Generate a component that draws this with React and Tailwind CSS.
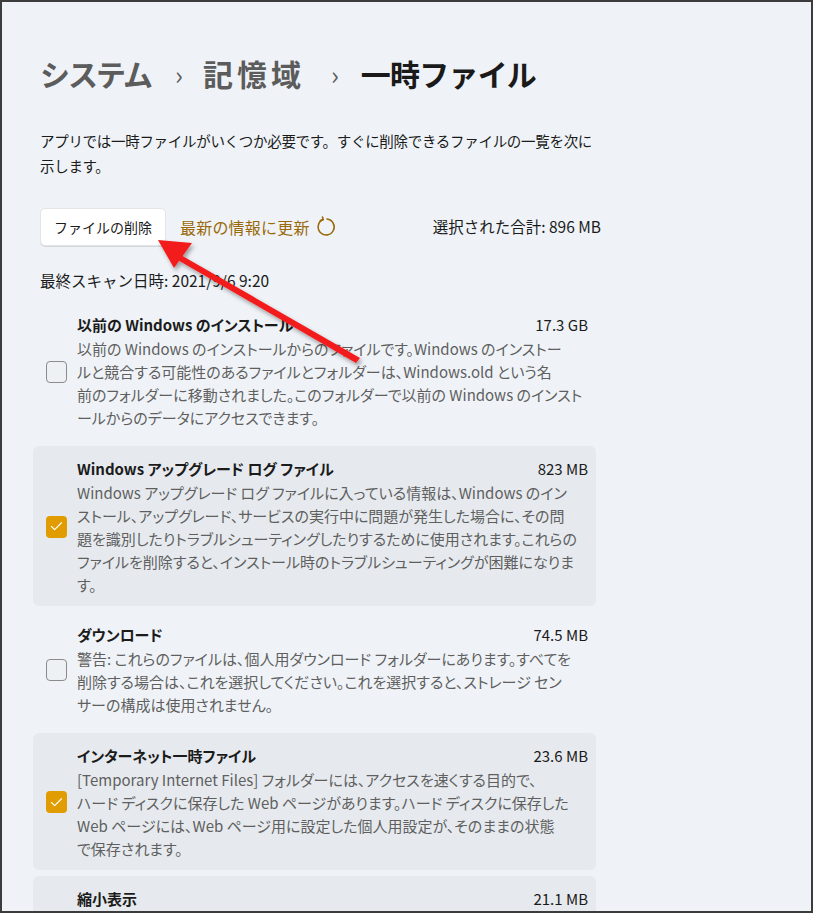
import { Check } from 'lucide-react'

const font = { fontFamily: '"Noto Sans CJK JP", "Noto Sans", sans-serif' }

const items = [
  {
    title: '以前の Windows のインストール',
    size: '17.3 GB',
    checked: false,
    lines: [
      '以前の Windows のインストールからのファイルです。Windows のインストー',
      'ルと競合する可能性のあるファイルとフォルダーは、Windows.old という名',
      '前のフォルダーに移動されました。このフォルダーで以前の Windows のインスト',
      'ールからのデータにアクセスできます。',
    ],
  },
  {
    title: 'Windows アップグレード ログ ファイル',
    size: '823 MB',
    checked: true,
    lines: [
      'Windows アップグレード ログ ファイルに入っている情報は、Windows のイン',
      'ストール、アップグレード、サービスの実行中に問題が発生した場合に、その問',
      '題を識別したりトラブルシューティングしたりするために使用されます。これらの',
      'ファイルを削除すると、インストール時のトラブルシューティングが困難になりま',
      'す。',
    ],
  },
  {
    title: 'ダウンロード',
    size: '74.5 MB',
    checked: false,
    lines: [
      '警告: これらのファイルは、個人用ダウンロード フォルダーにあります。すべてを',
      '削除する場合は、これを選択してください。これを選択すると、ストレージ セン',
      'サーの構成は使用されません。',
    ],
  },
  {
    title: 'インターネット一時ファイル',
    size: '23.6 MB',
    checked: true,
    lines: [
      '[Temporary Internet Files] フォルダーには、アクセスを速くする目的で、',
      'ハード ディスクに保存した Web ページがあります。ハード ディスクに保存した',
      'Web ページには、Web ページ用に設定した個人用設定が、そのままの状態',
      'で保存されます。',
    ],
  },
  {
    title: '縮小表示',
    size: '21.1 MB',
    checked: true,
    lines: [
      'Windows では、すべての画像、ビデオ、ドキュメント ファイルの縮小表示のコピ',
      'ーが保持されるため、フォルダーを開いたときにすぐに表示できます。これらの',
      '縮小表示を削除すると、必要に応じて自動的に再作成されます。',
    ],
  },
]

function CheckBox({ checked }) {
  if (checked) {
    return (
      <div className="w-[21px] h-[22px] rounded-[4px] bg-[#e09c00] flex items-center justify-center shrink-0">
        <Check className="w-[15px] h-[15px] text-white" strokeWidth={1.8} />
      </div>
    )
  }
  return <div className="w-[21px] h-[22px] rounded-[4px] border border-[#8b8b8b] bg-[#eef1f4] shrink-0" />
}

function Item({ item }) {
  return (
    <div
      className={`flex items-center rounded-[6px] pl-[13px] pr-[8px] pt-[12px] pb-[10.5px] ${
        item.checked ? 'bg-[#e6eaee]' : ''
      }`}
    >
      <CheckBox checked={item.checked} />
      <div className="ml-[10px] flex-1 min-w-0">
        <div className="flex justify-between h-[23px] items-center text-[15px] text-[#1b1b1b]">
          <span className="font-semibold [font-feature-settings:'palt']">{item.title}</span>
          <span>{item.size}</span>
        </div>
        {item.lines.map((l, i) => (
          <div key={i} className="h-[23px] leading-[23px] text-[15px] text-[#5f5f5f] whitespace-nowrap [font-feature-settings:'palt']">
            {l}
          </div>
        ))}
      </div>
    </div>
  )
}

function RefreshIcon() {
  return (
    <svg width="22" height="22" viewBox="0 0 22 22" fill="none" stroke="#9a6a0a" strokeWidth="1.6" strokeLinecap="round" strokeLinejoin="round">
      <path d="M7 3.6 A8 8 0 1 0 11 3" />
      <path d="M6.5 1 L7.2 3.8 L4.4 4.6" />
    </svg>
  )
}

export default function App() {
  return (
    <div style={font} className="relative w-[813px] h-[913px] overflow-hidden border-2 border-[#3c3c3c] bg-[#eff3f7]">
      <div className="pl-[38px] pt-[51px]">
        <h1 className="flex items-center h-[40px] text-[30px] font-semibold">
          <span className="text-[#5c5c5c] tracking-[-2px]">システム</span>
          <span className="text-[#5c5c5c] text-[26px] font-normal ml-[24px] mr-[20px]">›</span>
          <span className="text-[#5c5c5c] tracking-[4px]">記憶域</span>
          <span className="text-[#5c5c5c] text-[26px] font-normal ml-[26px] mr-[22px]">›</span>
          <span className="text-[#1a1a1a] tracking-[-0.8px]">一時ファイル</span>
        </h1>

        <div className="mt-[35px] text-[14.5px] leading-[25px] text-[#1b1b1b] tracking-[-0.3px]">
          <div className="whitespace-nowrap">アプリでは一時ファイルがいくつか必要です。すぐに削除できるファイルの一覧を次に</div>
          <div>示します。</div>
        </div>

        <div className="mt-[30px] flex items-center w-[561px]">
          <button className="h-[38px] px-[13px] rounded-[5px] bg-white border border-[#e2e5e8] shadow-[0_1px_0_#d5d8db] text-[14px] text-[#1b1b1b]">
            ファイルの削除
          </button>
          <span className="ml-[14px] text-[16px] text-[#9a6a0a] tracking-[0.2px]">最新の情報に更新</span>
          <span className="ml-[6px]"><RefreshIcon /></span>
          <span className="ml-auto text-[15.5px] text-[#1b1b1b]">選択された合計: 896 MB</span>
        </div>

        <div className="mt-[24px] h-[20px] leading-[20px] text-[15.5px] text-[#1b1b1b]">最終スキャン日時: 2021/9/6 9:20</div>
      </div>

      <div className="ml-[31px] mt-[12px] w-[563px] flex flex-col gap-[6px]">
        {items.map((it, i) => (
          <Item key={i} item={it} />
        ))}
      </div>

      <svg className="absolute left-0 top-0 pointer-events-none" width="813" height="913">
        <defs>
          <filter id="sh" x="-20%" y="-20%" width="140%" height="140%">
            <feDropShadow dx="2" dy="3" stdDeviation="2" floodColor="#000" floodOpacity="0.35" />
          </filter>
        </defs>
        <g filter="url(#sh)" transform="translate(-1,0)">
          <path d="M359 356 L178 252 L175 257 L355 361 Z" fill="#f21b1b" />
          <path d="M157 238 L191 241 L173 266 Z" fill="#f21b1b" />
        </g>
      </svg>
    </div>
  )
}
